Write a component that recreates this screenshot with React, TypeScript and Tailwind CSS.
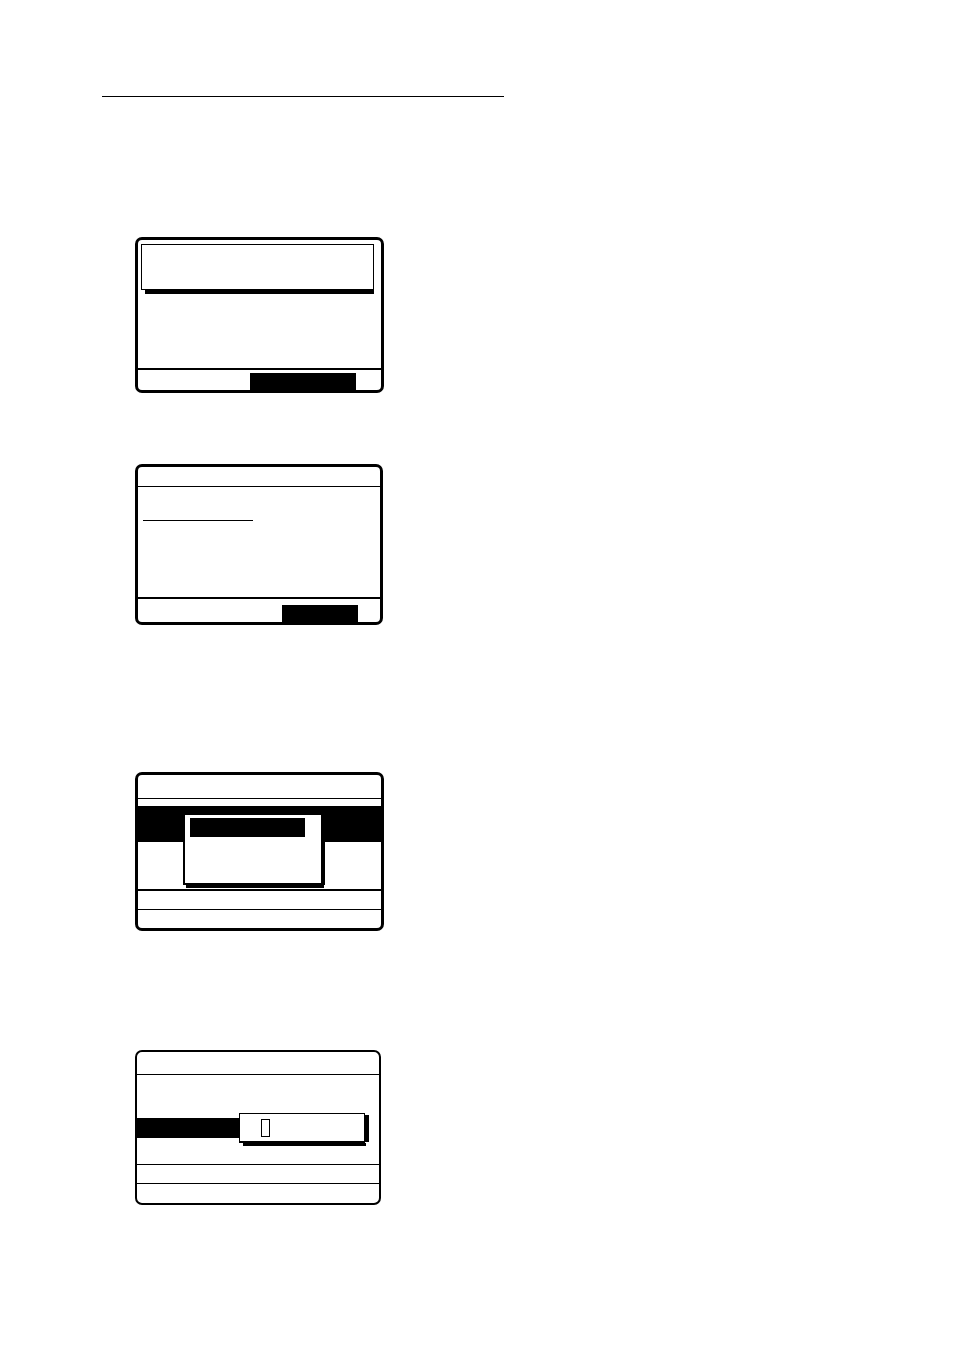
import type { ReactNode } from "react";

type ScreenProps = {
  label: string;
  className: string;
  children: ReactNode;
};

/** Rounded bezel shared by all of the display panels. */
function Screen({ label, className, children }: ScreenProps) {
  return (
    <section
      aria-label={label}
      className={`flex max-w-full flex-col overflow-hidden rounded-[7px] border-black bg-white ${className}`}
    >
      {children}
    </section>
  );
}

function MessageScreen() {
  return (
    <Screen label="Message" className="w-[249px] border-[3px]">
      <div className="mt-1 mr-[7px] ml-[3px]">
        <div className="h-[46px] border border-black" />
        <div className="ml-1 h-1 bg-black" />
      </div>
      <div className="mt-[74px] flex h-[22px] items-end justify-end border-t-2 border-black pr-[25px]">
        <div className="h-[17px] w-[106px] bg-black" />
      </div>
    </Screen>
  );
}

function TextScreen() {
  return (
    <Screen label="Text" className="w-[248px] border-[3px]">
      <div className="h-5 border-b border-black" />
      <div className="h-[110px] px-[5px] pt-[33px]">
        <div className="h-px w-[110px] bg-black" />
      </div>
      <div className="flex h-[25px] items-end justify-end border-t-2 border-black pr-[22px]">
        <div className="h-[17px] w-[76px] bg-black" />
      </div>
    </Screen>
  );
}

function MenuScreen() {
  return (
    <Screen label="Menu" className="w-[249px] border-[3px]">
      <div className="h-6 border-b border-black" />
      <div className="relative h-[90px] pt-[7px]">
        <div className="h-9 bg-black" />
        {/* Pop-up menu over the highlighted row */}
        <div className="absolute top-[14px] left-[45px] w-[142px]">
          <div className="h-[72px] border-2 border-r-4 border-black bg-white px-[5px] pt-[3px]">
            <div className="h-[19px] w-[115px] bg-black" />
          </div>
          <div className="mr-px ml-[3px] h-[3px] bg-black" />
        </div>
      </div>
      <div className="h-[21px] border-t-2 border-b border-black pb-[18px]" />
      <div className="h-[18px]" />
    </Screen>
  );
}

function EntryScreen() {
  return (
    <Screen label="Entry" className="w-[246px] border-2">
      <div className="h-[23px] border-b border-black" />
      <div className="relative h-[89px] pt-[43px]">
        <div className="h-5 w-[103px] bg-black" />
        {/* Entry box with its drop shadow */}
        <div className="absolute top-[38px] left-[102px] flex w-[130px] items-start">
          <div className="w-[127px]">
            <div className="mr-px flex h-[30px] items-center border border-b-2 border-black bg-white pl-[21px]">
              <div className="h-[18px] w-[9px] border border-black" />
            </div>
            <div className="ml-1 h-[3px] bg-black" />
          </div>
          <div className="mt-[2px] -ml-px h-[27px] w-1 bg-black" />
        </div>
      </div>
      <div className="h-5 border-y border-black" />
      <div className="h-[19px]" />
    </Screen>
  );
}

export default function App() {
  return (
    <main className="min-h-screen bg-white px-[102px] pt-24 pb-36">
      <hr className="w-[402px] max-w-full border-0 border-t border-black" />
      <div className="flex flex-col items-start pt-[140px] pl-[33px]">
        <MessageScreen />
        <div className="h-[71px]" />
        <TextScreen />
        <div className="h-[147px]" />
        <MenuScreen />
        <div className="h-[119px]" />
        <EntryScreen />
      </div>
    </main>
  );
}
